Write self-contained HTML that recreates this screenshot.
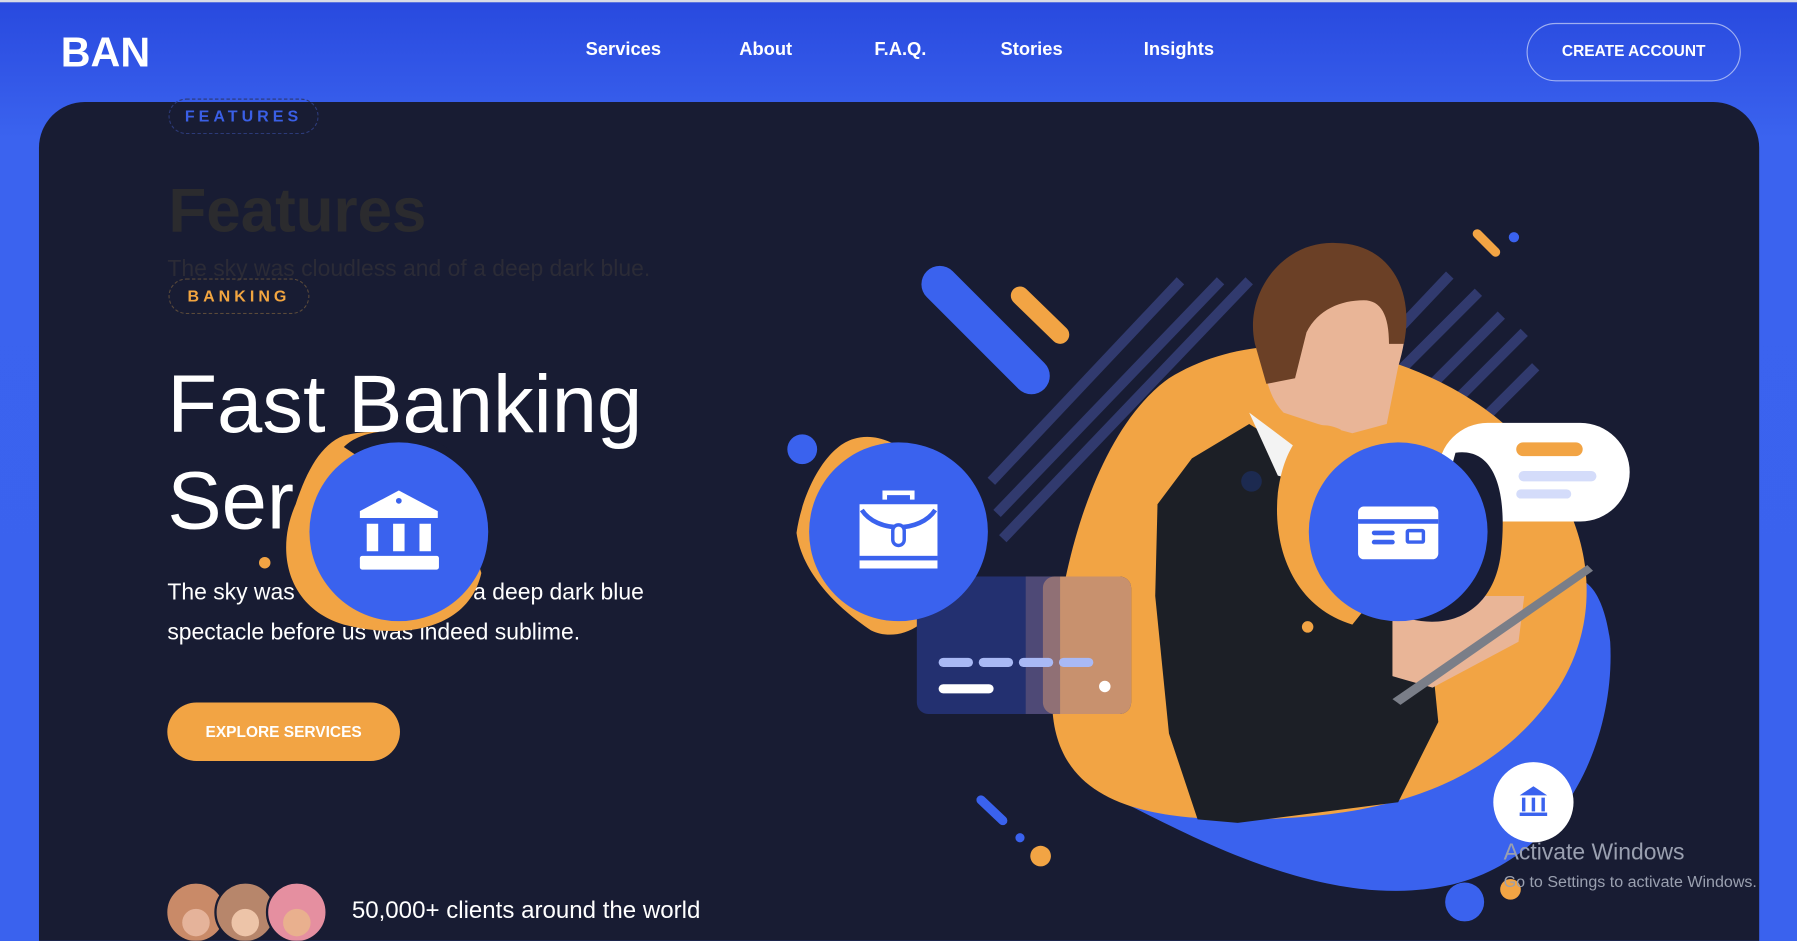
<!DOCTYPE html>
<html><head><meta charset="utf-8"><style>
*{margin:0;padding:0;box-sizing:border-box}
html,body{width:1797px;height:941px;overflow:hidden;background:#3a62ee;font-family:"Liberation Sans",sans-serif}
#w{position:absolute;left:0;top:0;width:1568px;height:821px;transform:scale(1.14605);transform-origin:0 0;background:linear-gradient(#2849de,#3b63ef 120px,#3a62ee);overflow:hidden}
.a{position:absolute}
.nav{position:absolute;top:35px;color:#fff;font-size:16px;font-weight:bold}
.pill{position:absolute;border:1.5px dashed;border-radius:16px;font-size:14px;font-weight:bold;letter-spacing:3.5px;text-align:center}
</style></head><body><div id="w">
<div class="a" style="left:0;top:0;width:1568px;height:2px;background:#d8dbe6"></div>
<div class="a" style="left:53px;top:25px;color:#fff;font-size:36px;font-weight:bold;letter-spacing:0px">BAN</div>
<div class="nav" style="left:511px">Services</div>
<div class="nav" style="left:645px">About</div>
<div class="nav" style="left:763px">F.A.Q.</div>
<div class="nav" style="left:873px">Stories</div>
<div class="nav" style="left:998px">Insights</div>
<div class="a" style="left:1332px;top:20px;width:187px;height:51px;border:1px solid rgba(255,255,255,.55);border-radius:26px;color:#fff;font-size:13.5px;font-weight:bold;text-align:center;line-height:47px">CREATE ACCOUNT</div>
<div class="a" style="left:34px;top:89px;width:1501px;height:760px;background:#181c33;border-radius:40px 40px 0 0"></div>

<div class="pill" style="left:147px;top:86px;width:131px;height:31px;border-color:#2c3a78;color:#3a5fe6;line-height:29px">FEATURES</div>
<div class="a" style="left:147px;top:153px;font-size:54px;font-weight:bold;color:#2b2b2e">Features</div>
<div class="a" style="left:146px;top:224px;font-size:20px;color:#2b2b36">The sky was cloudless and of a deep dark blue.</div>
<div class="pill" style="left:147px;top:243px;width:123px;height:31px;border-color:#5a4a3a;color:#f2a540;line-height:29px">BANKING</div>
<div class="a" style="left:146px;top:312px;font-size:71px;color:#fff;line-height:84px">Fast Banking<br>Ser</div>
<div class="a" style="left:146px;top:500px;font-size:20px;color:#fff;line-height:35px">The sky was cloudless and of a deep dark blue<br>spectacle before us was indeed sublime.</div>

<svg class="a" style="left:0;top:0" width="1568" height="821">
<path d="M300 380 C340 370 380 385 395 420 L420 500 C410 545 360 560 300 545 C250 530 240 480 258 440 C268 410 280 388 300 380Z" fill="#f2a444"/>
<path d="M300 390 C320 370 370 372 395 395 L330 410Z" fill="#181c33"/>
<circle cx="348" cy="464" r="78" fill="#3a62ee"/>
<g fill="#fff"><path d="M314 446 L348 428 L382 446 L382 452 L314 452Z"/><rect x="320" y="457" width="10" height="24"/><rect x="343" y="457" width="10" height="24"/><rect x="366" y="457" width="10" height="24"/><rect x="314" y="485" width="69" height="12" rx="2"/></g>
<circle cx="348" cy="437" r="2.5" fill="#3a62ee"/>
<circle cx="231" cy="491" r="5" fill="#f2a444"/>

<g stroke="#313a6e" stroke-width="9">
<line x1="865" y1="420" x2="1030" y2="245"/><line x1="870" y1="448" x2="1065" y2="245"/><line x1="875" y1="470" x2="1090" y2="245"/>
<line x1="1180" y1="330" x2="1265" y2="240"/><line x1="1200" y1="345" x2="1290" y2="255"/><line x1="1230" y1="355" x2="1310" y2="275"/><line x1="1255" y1="365" x2="1330" y2="290"/><line x1="1290" y1="370" x2="1340" y2="320"/>
</g>
<path d="M1000 640 C1100 660 1250 620 1330 540 C1380 470 1400 520 1405 560 C1410 650 1360 760 1250 775 C1150 790 1040 730 980 700Z" fill="#3a62ee"/>
<path d="M1020 330 C1100 280 1220 300 1300 360 C1380 420 1410 520 1360 600 C1300 690 1200 715 1080 715 C980 715 918 690 918 610 C918 520 950 380 1020 330Z" fill="#f2a444"/>
<path d="M1090 370 L1130 395 L1160 420 L1200 470 L1230 520 L1250 580 L1255 630 L1220 700 L1080 718 L1045 715 L1020 640 L1008 520 L1010 440 L1040 400Z" fill="#1c1f26"/>
<path d="M1090 360 L1130 390 L1135 420 L1115 415 Z" fill="#f3f3f3"/>
<path d="M1105 270 C1110 240 1150 215 1190 225 C1225 235 1235 270 1220 320 L1210 370 L1180 378 L1150 370 L1120 360 C1100 340 1100 300 1105 270Z" fill="#e9b597"/>
<path d="M1095 300 C1085 255 1120 210 1165 212 C1210 212 1235 250 1225 300 L1212 300 C1212 275 1205 262 1190 262 C1170 262 1150 270 1140 290 L1130 330 L1105 335Z" fill="#6b4026"/>
<path d="M1215 520 L1330 520 L1325 560 L1250 600 L1215 590Z" fill="#e9b597"/>
<path d="M1215 610 L1385 493 L1390 498 L1222 615Z" fill="#7a7e88"/>
<path d="M745 383 C770 375 800 395 810 420 L820 520 C810 550 780 560 760 550 C730 530 700 500 695 465 C700 430 720 390 745 383Z" fill="#f2a444"/>
<rect x="800" y="503" width="187" height="120" rx="10" fill="#233070"/>
<rect x="910" y="503" width="77" height="120" rx="10" fill="#c8916e"/>
<rect x="895" y="503" width="30" height="120" fill="#6a5a7a" opacity=".6"/>
<g fill="#a9b9f5"><rect x="819" y="574" width="30" height="8" rx="4"/><rect x="854" y="574" width="30" height="8" rx="4"/><rect x="889" y="574" width="30" height="8" rx="4"/><rect x="924" y="574" width="30" height="8" rx="4"/></g>
<rect x="819" y="597" width="48" height="8" rx="4" fill="#fff"/><circle cx="964" cy="599" r="5" fill="#fff"/>
<circle cx="784" cy="464" r="78" fill="#3a62ee"/>
<path d="M770 428 h28 v8 h-4 v-4 h-20 v4 h-4Z M750 440 h68 v56 h-68Z" fill="#fff"/>
<path d="M752 445 C765 465 803 465 816 445" stroke="#3a62ee" stroke-width="4" fill="none"/>
<rect x="779" y="458" width="10" height="18" rx="5" fill="#fff" stroke="#3a62ee" stroke-width="3"/>
<rect x="750" y="485" width="68" height="4" fill="#3a62ee"/>
<circle cx="700" cy="392" r="13" fill="#3a62ee"/>
<line x1="820" y1="248" x2="900" y2="328" stroke="#3a62ee" stroke-width="32" stroke-linecap="round"/>
<line x1="890" y1="258" x2="925" y2="292" stroke="#f2a444" stroke-width="16" stroke-linecap="round"/>
<line x1="1289" y1="204" x2="1305" y2="220" stroke="#f2a444" stroke-width="8" stroke-linecap="round"/>
<circle cx="1321" cy="207" r="4.5" fill="#3a62ee"/>
<line x1="856" y1="698" x2="875" y2="716" stroke="#3a62ee" stroke-width="8" stroke-linecap="round"/>
<circle cx="890" cy="731" r="4" fill="#3a62ee"/><circle cx="908" cy="747" r="9" fill="#f2a444"/>
<circle cx="1092" cy="420" r="9" fill="#1c2a50"/>
<rect x="1255" y="369" width="167" height="86" rx="43" fill="#fff"/>
<rect x="1323" y="386" width="58" height="12" rx="6" fill="#f2a444"/>
<rect x="1325" y="411" width="68" height="9" rx="4.5" fill="#d4dcfa"/>
<rect x="1323" y="427" width="48" height="8" rx="4" fill="#d4dcfa"/>
<path d="M1170 375 C1140 360 1120 390 1115 430 C1110 480 1130 530 1180 545 L1200 520 Z" fill="#f2a444"/>
<path d="M1270 395 C1305 390 1315 430 1310 480 C1305 530 1270 550 1230 540 Z" fill="#181c33"/>
<circle cx="1220" cy="464" r="78" fill="#3a62ee"/>
<rect x="1185" y="442" width="70" height="46" rx="5" fill="#fff"/>
<rect x="1185" y="453" width="70" height="4" fill="#3a62ee"/>
<rect x="1197" y="463" width="20" height="4" rx="2" fill="#3a62ee"/><rect x="1197" y="471" width="20" height="4" rx="2" fill="#3a62ee"/>
<rect x="1228" y="463" width="14" height="10" rx="1" fill="none" stroke="#3a62ee" stroke-width="3"/>
<circle cx="1141" cy="547" r="5" fill="#f2a444"/>
<circle cx="1338" cy="700" r="35" fill="#fff"/>
<g fill="#3a62ee"><path d="M1326 694 L1338 686 L1350 694Z"/><rect x="1328" y="696" width="3" height="12"/><rect x="1336.5" y="696" width="3" height="12"/><rect x="1345" y="696" width="3" height="12"/><rect x="1326" y="709" width="24" height="3"/></g>
<circle cx="1278" cy="787" r="17" fill="#3a62ee"/><circle cx="1318" cy="776" r="9" fill="#f2a444"/>
<circle cx="171" cy="796" r="26" fill="#c98a68" stroke="#181c33" stroke-width="2"/>
<circle cx="214" cy="796" r="26" fill="#b7866b" stroke="#181c33" stroke-width="2"/>
<circle cx="259" cy="796" r="26" fill="#e58fa0" stroke="#181c33" stroke-width="2"/>
<circle cx="171" cy="805" r="12" fill="#e5b39a"/><circle cx="214" cy="805" r="12" fill="#edc4a8"/><circle cx="259" cy="805" r="12" fill="#e9b08e"/>
</svg>
<div class="a" style="left:146px;top:613px;width:203px;height:51px;background:#f2a444;border-radius:26px;color:#fff;font-size:13.5px;font-weight:bold;text-align:center;line-height:51px">EXPLORE SERVICES</div>
<div class="a" style="left:307px;top:783px;font-size:21px;color:#fff">50,000+ clients around the world</div>
<div class="a" style="left:1312px;top:733px;font-size:20px;color:#9aa0b0">Activate Windows</div>
<div class="a" style="left:1312px;top:761px;font-size:14px;color:#9aa0b0">Go to Settings to activate Windows.</div>
</div></body></html>
